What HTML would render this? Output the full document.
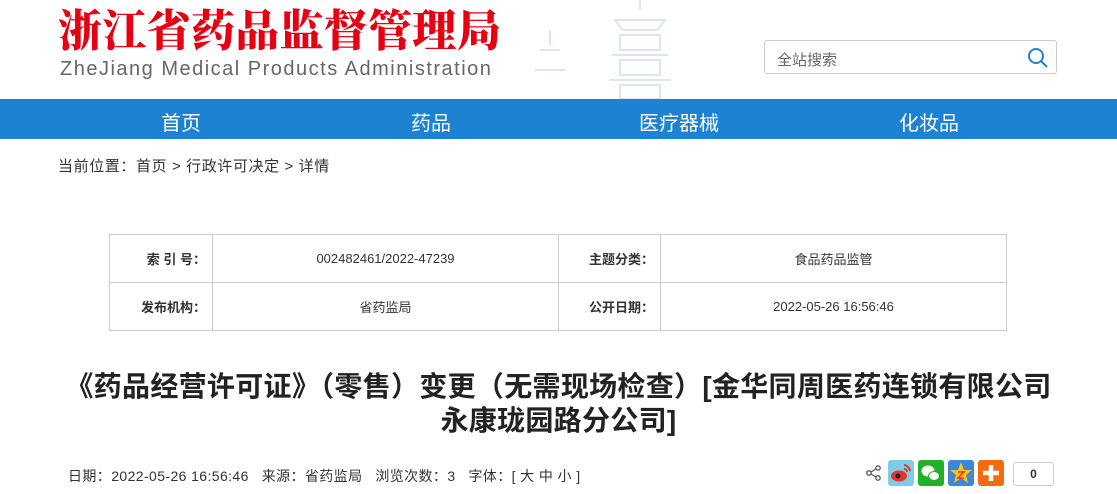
<!DOCTYPE html>
<html><head><meta charset="utf-8"><style>
body{margin:0;width:1117px;height:494px;overflow:hidden;background:#fff;font-family:"Liberation Sans","Noto Sans CJK SC",sans-serif;position:relative}
.a{position:absolute}
.t1{left:58px;top:5px;font-family:"Liberation Serif","Noto Serif CJK SC",serif;font-weight:900;font-size:44px;color:#e60012;line-height:54px;white-space:nowrap;letter-spacing:0.3px}
.t2{left:60px;top:58px;font-size:20px;color:#666;letter-spacing:1.5px}
.search{left:764px;top:40px;width:293px;height:34px;border:1px solid #ccc;border-radius:3px;box-sizing:border-box}
.nav{left:0;top:99px;width:1117px;height:40px;background:#1e82d2}
.nav span{position:absolute;top:8px;color:#fff;font-size:20px}
table{border-collapse:collapse;position:absolute;left:109px;top:234px;width:898px;font-size:13px;color:#333}
td{border:1px solid #ccc;height:47px;text-align:center;padding:0}
.l{font-weight:bold;text-align:right;padding-right:6px}
h1{position:absolute;left:0;width:1117px;top:370px;margin:0;text-align:center;font-size:28px;line-height:34px;color:#222;font-weight:bold;letter-spacing:0.3px}
.meta{left:68px;top:466px;font-size:14px;color:#333;letter-spacing:0.4px}
.ic{position:absolute;top:460px;width:26px;height:26px;border-radius:3px}
</style></head><body>
<svg class="a" style="left:520px;top:0" width="220" height="99"><g fill="none" stroke="#dde6f0" stroke-width="2"><path d="M120 0v10M95 20h50l-8 10h-34zM100 35h40v15h-40zM92 55h56M100 60h40v15h-40zM90 80h60M100 85h40v14h-40zM30 30v15M20 50h20M15 70h30"/></g></svg>
<div class="a t1">浙江省药品监督管理局</div>
<div class="a t2">ZheJiang Medical Products Administration</div>
<div class="a search"><span class="a" style="left:12px;top:8px;font-size:15px;color:#666">全站搜索</span>
<svg class="a" style="left:262px;top:6px" width="22" height="22"><circle cx="9" cy="9" r="7" fill="none" stroke="#1e82d2" stroke-width="2"/><path d="M14 14l6 6" stroke="#1e82d2" stroke-width="2"/></svg></div>
<div class="a nav"><span style="left:161px">首页</span><span style="left:411px">药品</span><span style="left:639px">医疗器械</span><span style="left:899px">化妆品</span></div>
<div class="a" style="left:58px;top:155px;font-size:15px;color:#333;letter-spacing:0.6px">当前位置：首页 &gt; 行政许可决定 &gt; 详情</div>
<table><tr><td class="l" style="width:96px">索 引 号：</td><td style="width:345px">002482461/2022-47239</td><td class="l" style="width:95px">主题分类：</td><td>食品药品监管</td></tr>
<tr><td class="l">发布机构：</td><td>省药监局</td><td class="l">公开日期：</td><td>2022-05-26 16:56:46</td></tr></table>
<h1>《药品经营许可证》（零售）变更（无需现场检查）[金华同周医药连锁有限公司<br>永康珑园路分公司]</h1>
<div class="a meta">日期：2022-05-26 16:56:46 &nbsp;&nbsp;来源：省药监局 &nbsp;&nbsp;浏览次数：3 &nbsp;&nbsp;字体：[ 大 中 小 ]</div>
<svg class="a" style="left:866px;top:465px" width="16" height="16"><g fill="none" stroke="#555" stroke-width="1.3"><circle cx="12" cy="3" r="2.2"/><circle cx="3" cy="8" r="2.2"/><circle cx="12" cy="13" r="2.2"/><path d="M5 7l5-3M5 9l5 3"/></g></svg>
<div class="ic" style="left:888px;background:#7dcde8"><svg width="26" height="26"><path d="M16 5a7 7 0 0 1 6 6M16 9a3 3 0 0 1 3 3" stroke="#e8332a" stroke-width="2" fill="none"/><ellipse cx="11" cy="16" rx="8" ry="5.5" fill="#e8332a"/><circle cx="10" cy="16" r="2.5" fill="#222"/></svg></div>
<div class="ic" style="left:918px;background:#22b02a"><svg width="26" height="26"><ellipse cx="10" cy="11" rx="6.5" ry="5.5" fill="#fff"/><ellipse cx="16" cy="16" rx="5.5" ry="4.5" fill="#fff" stroke="#22b02a"/></svg></div>
<div class="ic" style="left:948px;background:#3e86d8"><svg width="26" height="26"><polygon points="13,2 16,10 24,10 18,15 20,23 13,18 6,23 8,15 2,10 10,10" fill="#f8c516"/><path d="M10 12h6l-6 6h6" stroke="#e8332a" stroke-width="1.5" fill="none"/></svg></div>
<div class="ic" style="left:978px;background:#f46b0c"><svg width="26" height="26"><path d="M13 5v16M5 13h16" stroke="#fff" stroke-width="4.5"/></svg></div>
<div class="a" style="left:1013px;top:462px;width:39px;height:22px;border:1px solid #ccc;border-radius:3px;text-align:center;font-size:12px;line-height:22px;font-weight:bold;color:#333">0</div>
</body></html>
